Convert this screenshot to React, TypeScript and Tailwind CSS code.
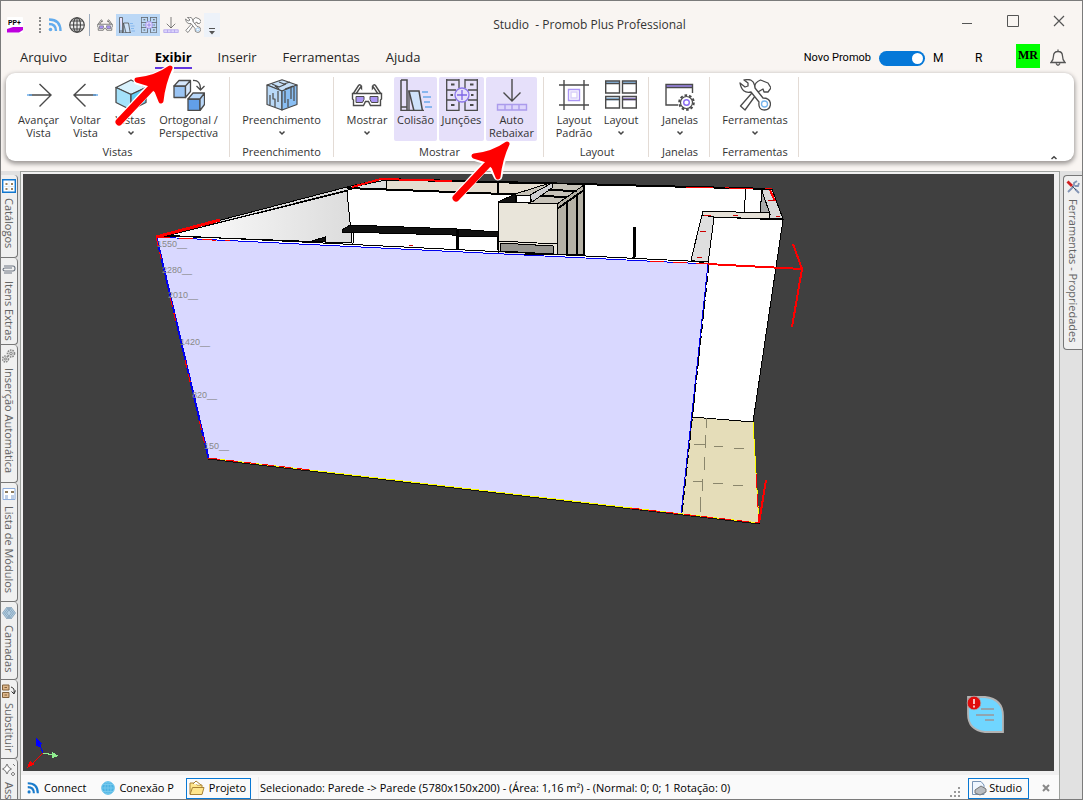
import type { ReactNode } from "react";

type IconProps = { className?: string };

const GlassesIcon = ({ className = "h-8 w-8" }: IconProps) => (
  <svg viewBox="0 0 32 32" className={className} fill="none" stroke="#4a4a4a" strokeWidth="1.4">
    <path d="M2 15 7.5 6.5Q9 5 10.300 6.800 M5 15 9.500 8.200 10.500 9.500V6.800 M30 15 24.500 6.500Q23 5 21.700 6.800M27 15 22.500 8.200 21.500 9.500V6.800" />
    <path d="M1.500 14.500H30.500V20L29.500 21V26.500H19.500L17.500 22.500H14.500L12.500 26.500H2.500V21L1.500 20Z" fill="#fff" />
    <path d="M5 17.500H13V20.500L11.500 23.500H5Z M19 17.500H27V23.500H20.500L19 20.500Z" fill="#ab96f5" strokeWidth="1" />
  </svg>
);

const CollisionIcon = ({ className = "h-8 w-8" }: IconProps) => (
  <svg viewBox="0 0 32 32" className={className} fill="none" stroke="#4a4a4a" strokeWidth="1.5">
    <path d="M1 1H7V32 M1 1V32 M1 28H7" fill="#e6e0fa" />
    <path d="M9 12H19L22.500 32H14Z" fill="#cfe3fa" />
    <path d="M1 31.500H24 M9 12V31" strokeWidth="1.300" />
    <path d="M22 13H28 M23 18H31 M24 23H30 M25 28H32" stroke="#6ba8ea" strokeWidth="1.300" />
  </svg>
);

const JunctionIcon = ({ className = "h-8 w-8" }: IconProps) => (
  <svg viewBox="0 0 32 32" className={className} fill="none" stroke="#4a4a4a" strokeWidth="1.300">
    <path d="M.700 0V31.500H13V22 M13 0V9 M.700 1H13 M.700 11H10 M.700 21H10 M31.300 0V31.500H19V22 M19 0V9 M19 1H31.300 M22 11H31.300 M22 21H31.300" />
    <path d="M5 5.500H8.500 M24 5.500H27.500 M5 26H8.500 M24 26H27.500 M4.500 16H7 M25 16H27.500" strokeWidth="1.800" />
    <circle cx="16" cy="16" r="7" stroke="#8b76e8" fill="#e6e0fa" />
    <path d="M16 11V21 M11 16H21" stroke="#7d66e6" />
  </svg>
);

const LowerIcon = ({ className = "h-8 w-8" }: IconProps) => (
  <svg viewBox="0 0 32 32" className={className} fill="none" stroke="#4a4a4a" strokeWidth="1.400">
    <path d="M16 0V22 M7.500 13.500 16 22 24.500 13.500" />
    <path d="M1.500 25.500H30.500V31H1.500Z M9 25.500V31 M16 25.500V31 M23 25.500V31" stroke="#ab9bec" fill="#ddd5fb" />
  </svg>
);

const ToolsIcon = ({ className = "h-8 w-8" }: IconProps) => (
  <svg viewBox="0 0 32 32" className={className} fill="#fff" stroke="#4a4a4a" strokeWidth="1.300" strokeLinejoin="round">
    <path d="M19 13 6 31 1.500 27 16 10.500Q14 4 21.500 1L29 4 32 9 29 13 25 13 24 10Z" />
    <path d="M1 4 6 8 9 7 9 4 5 1Q14 -1 15.500 6L16 9 24 19Q31 19 31.500 25 31 31 25.500 31 19 31 20 23L12 13Q3 15 1 4Z" />
    <circle cx="25.500" cy="25" r="3" stroke="#78b6ee" />
  </svg>
);

const ForwardIcon = () => (
  <svg viewBox="0 0 32 32" className="h-8 w-8" fill="none" stroke="#4a4a4a" strokeWidth="1.400">
    <path d="M6 16H28 M16.500 5 28 16 16.500 27.500" />
    <path d="M4 16H9" stroke="#64a9eb" />
  </svg>
);

const BackIcon = () => (
  <svg viewBox="0 0 32 32" className="h-8 w-8" fill="none" stroke="#4a4a4a" strokeWidth="1.400">
    <path d="M26 16H4 M15.500 5 4 16 15.500 27.500" />
    <path d="M23 16H28" stroke="#64a9eb" />
  </svg>
);

const CubeIcon = () => (
  <svg viewBox="0 0 32 32" className="h-8 w-8" stroke="#4a4a4a" strokeWidth="1.300" strokeLinejoin="round">
    <path d="M1 8.500 16 1 31 8.500 16 15.500Z" fill="#d8f2fd" />
    <path d="M1 8.500 16 15.500V31L1 23.500Z" fill="#a4e1fa" />
    <path d="M31 8.500 16 15.500V31L31 23.500Z" fill="#62cdf5" />
  </svg>
);

const PerspectiveIcon = () => (
  <svg viewBox="0 0 32 32" className="h-8 w-8" stroke="#4a4a4a" strokeWidth="1.300" strokeLinejoin="round">
    <path d="M1 7H12.500V18.500H1Z" fill="#9ac4f3" />
    <path d="M1 7 6 1.500H17.500L12.500 7Z M12.500 7 17.500 1.500V12.500L12.500 18.500Z" fill="#d4e6fb" />
    <path d="M15 20H27V31.500H15Z" fill="#629fe9" />
    <path d="M15 20 20 14H31.500L27 20Z M27 20 31.500 14V25.500L27 31.500Z" fill="#b9d7f8" />
    <path d="M20 1.500Q27.500 1 27.500 10 M23.500 7 27.500 11 31.500 7" fill="none" />
  </svg>
);

const FillIcon = () => (
  <svg viewBox="0 0 32 32" className="h-8 w-8" stroke="#4a4a4a" strokeWidth="1.200" strokeLinejoin="round">
    <path d="M1 6 16 .800 31 6 16 12Z" fill="#c6dff7" />
    <path d="M1 6 16 12V31L1 25.500Z" fill="#b9d9f8" />
    <path d="M31 6 16 12V31L31 25.500Z" fill="#89bef3" />
    <path d="M4 16V26 M7 14V20H9V28 M12 12V23 M19 12V24 M22 20V28 M25 9V20 M28 8V22 M6 5 13 8 20 5 M13 3 18 5 24 3 M19 10 27 7 M9 7 13 10" fill="none" />
  </svg>
);

const DefaultLayoutIcon = () => (
  <svg viewBox="0 0 32 32" className="h-8 w-8" fill="none" stroke="#4a4a4a" strokeWidth="1.400">
    <path d="M6 1V31 M26 1V31 M1 6H31 M1 26H31" />
    <path d="M10.500 10.500H21.500V21.500H10.500Z" stroke="#ab96f5" />
    <path d="M13 13H19V19H13Z" stroke="#d9cffa" />
  </svg>
);

const LayoutIcon = () => (
  <svg viewBox="0 0 32 32" className="h-8 w-8" fill="none" stroke="#4a4a4a" strokeWidth="1.400">
    <path d="M1 3.500H14 M18 3.500H31 M1 20H14" stroke="#90c4f3" strokeWidth="2.500" />
    <path d="M18 20H31" stroke="#a38be8" strokeWidth="2.500" />
    <path d="M.700 2H14.500V14H.700Z M17.500 2H31.300V14H17.500Z M.700 17.500H14.500V29H.700Z M17.500 17.500H31.300V29H17.500Z M.700 4.500H14.500 M17.500 4.500H31.300 M.700 20.500H14.500 M17.500 20.500H31.300" />
  </svg>
);

const WindowIcon = () => (
  <svg viewBox="0 0 32 32" className="h-8 w-8" fill="none" stroke="#4a4a4a" strokeWidth="1.400">
    <path d="M2 7H28" stroke="#a08af0" strokeWidth="2" />
    <path d="M14 26H2V5.500H28.500V14 M2 8.500H28.500" />
    <circle cx="22.500" cy="23.500" r="7.300" strokeDasharray="2.600 2" strokeWidth="2" />
    <circle cx="22.500" cy="23.500" r="6" fill="#fff" strokeWidth="1.200" />
    <circle cx="22.500" cy="23.500" r="2.800" stroke="#8b6cf2" />
  </svg>
);

const Chevron = ({ up = false }: { up?: boolean }) => (
  <svg viewBox="0 0 8 6" className="h-1.5 w-2" fill="none" stroke="#444" strokeWidth="1.500">
    <path d={up ? "M1.500 4 4 1.800 6.500 4" : "M1.500 1.500 4 4 6.500 1.500"} />
  </svg>
);

const RssIcon = ({ className = "h-4 w-4" }: IconProps) => (
  <svg viewBox="0 0 16 16" className={className} fill="none" stroke="currentColor" strokeWidth="2.400">
    <circle cx="3.500" cy="12.500" r="1.800" fill="currentColor" stroke="none" />
    <path d="M2 7Q9 7 9 14 M2 2.500Q13.500 2.500 13.500 14" />
  </svg>
);

const GlobeIcon = ({ className = "h-4 w-4", fill = "#ececec" }: IconProps & { fill?: string }) => (
  <svg viewBox="0 0 16 16" className={className} fill="none" stroke="currentColor" strokeWidth="1.100">
    <circle cx="8" cy="8" r="7.300" fill={fill} />
    <ellipse cx="8" cy="8" rx="3.500" ry="7.300" />
    <path d="M8 .700V15.300 M.700 8H15.300 M2 4H14 M2 12H14" />
  </svg>
);

type RibbonButtonProps = { label: string; icon: ReactNode; width: string; menu?: boolean; active?: boolean };

const RibbonButton = ({ label, icon, width, menu, active }: RibbonButtonProps) => (
  <button
    className={`flex h-16 flex-col items-center rounded-xs pt-0.5 ${width} ${active ? "bg-[#e6e0fa]" : ""}`}
  >
    {icon}
    <span className="mt-0.5 text-center leading-[13px]">{label}</span>
    {menu && (
      <span className="flex h-[13px] items-center">
        <Chevron />
      </span>
    )}
  </button>
);

const RibbonGroup = ({ title, className, children }: { title: string; className: string; children: ReactNode }) => (
  <section className={`my-1 flex flex-col items-center border-r border-[#e3dbd5] ${className}`}>
    <div className="flex gap-0.5">{children}</div>
    <h2 className="mt-1 leading-[14px]">{title}</h2>
  </section>
);

const menus = ["Arquivo", "Editar", "Exibir", "Inserir", "Ferramentas", "Ajuda"];

const TitleBar = () => (
  <header className="flex h-11 shrink-0">
    <div className="flex w-[234px] items-center pt-1 pl-1.5">
      <svg viewBox="0 0 16 16" className="h-4 w-4">
        <rect width="16" height="16" rx="1" fill="#fff" />
        <text x="1" y="7.500" fontSize="7" fontWeight="700" fontFamily="Roboto, sans-serif">PP+</text>
        <path d="M0 12 6 10H16V13L12 15.500H0Z" fill="#be00de" />
      </svg>
      <div className="ml-4 h-4 w-0 border-l-2 border-dotted border-[#8a8a8a]" />
      <button className="ml-1.5 text-[#62abed]" aria-label="Connect"><RssIcon /></button>
      <button className="ml-1.5 text-[#454545]" aria-label="Web"><GlobeIcon /></button>
      <div className="mx-1 h-5.5 border-l border-[#9faec0]" />
      <button className="px-[3px]" aria-label="Mostrar"><GlassesIcon className="h-4 w-4" /></button>
      <button className="bg-[#bcd8f6] px-[3px] py-[3px]" aria-label="Colisão"><CollisionIcon className="h-4 w-4" /></button>
      <button className="bg-[#bcd8f6] px-[3px] py-[3px]" aria-label="Junções"><JunctionIcon className="h-4 w-4" /></button>
      <button className="px-[3px]" aria-label="Auto Rebaixar"><LowerIcon className="h-4 w-4" /></button>
      <button className="px-[3px]" aria-label="Ferramentas"><ToolsIcon className="h-4 w-4" /></button>
      <button className="flex h-6 w-4 items-end justify-center bg-[#edf2f9] pb-0.5" aria-label="Mais">
        <svg viewBox="0 0 8 7" className="h-[7px] w-2" fill="#555"><path d="M1 0H7V1H1Z M1 3H7L4 6.500Z" /></svg>
      </button>
    </div>
    <h1 className="flex flex-1 items-center justify-center pt-1 text-[12px] whitespace-pre text-[#333]">Studio  - Promob Plus Professional</h1>
    <div className="flex pb-1 text-[#555]">
      <button className="flex w-[46px] items-center justify-center" aria-label="Minimizar">
        <svg viewBox="0 0 12 12" className="h-3 w-3" stroke="currentColor"><path d="M1 8.500H11" /></svg>
      </button>
      <button className="flex w-[46px] items-center justify-center" aria-label="Maximizar">
        <svg viewBox="0 0 12 12" className="h-3 w-3" fill="none" stroke="currentColor"><path d="M.500 .500H11.500V11.500H.500Z" /></svg>
      </button>
      <button className="flex w-[46px] items-center justify-center" aria-label="Fechar">
        <svg viewBox="0 0 12 12" className="h-3 w-3" stroke="currentColor" strokeWidth="1.200"><path d="M1 1 11 11 M11 1 1 11" /></svg>
      </button>
    </div>
  </header>
);

const MenuBar = () => (
  <nav className="flex h-7 shrink-0 items-start pl-1.5 text-[13px] text-[#252525]">
    {menus.map((menu) => (
      <a key={menu} href="#" className="px-[13px] pt-0.5">
        <span className={menu === "Exibir" ? "block border-b-2 border-[#6236df] leading-5 font-bold text-black" : "block leading-5"}>
          {menu}
        </span>
      </a>
    ))}
    <div className="ml-auto flex h-[26px] items-center pr-4 font-['Roboto',sans-serif] text-[12px] text-black">
      <label htmlFor="novo-promob" className="text-[11px]">Novo Promob</label>
      <input
        id="novo-promob"
        type="checkbox"
        defaultChecked
        className="ml-2 h-[15px] w-[46px] appearance-none rounded-full bg-[#0578d8] pr-0.5 before:mt-0.5 before:ml-auto before:block before:h-[11px] before:w-[11px] before:rounded-full before:bg-white"
      />
      <span className="ml-2 w-[42px]">M</span>
      <span className="w-[41px]">R</span>
      <span className="mb-1 h-6 w-6 bg-[#00ff00] text-center font-['Liberation_Serif',serif] leading-[22px] font-bold">MR</span>
      <button className="ml-2.5" aria-label="Notificações">
        <svg viewBox="0 0 16 18" className="h-[18px] w-4" fill="none" stroke="#555" strokeWidth="1.300">
          <path d="M1 13.500Q3.500 11 3.500 7 3.500 2.500 8 2.500 12.500 2.500 12.500 7 12.500 11 15 13.500Z M8 .500V2.500 M6 14.500Q8 18 10 14.500" />
        </svg>
      </button>
    </div>
  </nav>
);

const Ribbon = () => (
  <div className="mr-2 ml-[5px] flex h-[88px] shrink-0 rounded-[9px] bg-white text-[11px] text-[#333] shadow-[0_2px_4px_1px_#9f9b99]">
    <RibbonGroup title="Vistas" className="w-[224px]">
      <RibbonButton width="w-[50px]" label="Avançar Vista" icon={<ForwardIcon />} />
      <RibbonButton width="w-10" label="Voltar Vista" icon={<BackIcon />} />
      <RibbonButton width="w-[46px]" label="Vistas" icon={<CubeIcon />} menu />
      <RibbonButton width="w-[66px]" label="Ortogonal / Perspectiva" icon={<PerspectiveIcon />} />
    </RibbonGroup>
    <RibbonGroup title="Preenchimento" className="w-[104px]">
      <RibbonButton width="w-[90px]" label="Preenchimento" icon={<FillIcon />} menu />
    </RibbonGroup>
    <RibbonGroup title="Mostrar" className="w-[210px] pl-0.5">
      <RibbonButton width="w-[50px]" label="Mostrar" icon={<GlassesIcon />} menu />
      <RibbonButton width="w-[43px]" label="Colisão" icon={<CollisionIcon />} active />
      <RibbonButton width="w-[45px]" label="Junções" icon={<JunctionIcon />} active />
      <RibbonButton width="w-[51px]" label="Auto Rebaixar" icon={<LowerIcon />} active />
    </RibbonGroup>
    <RibbonGroup title="Layout" className="w-[105px] pl-0.5">
      <RibbonButton width="w-[46px]" label="Layout Padrão" icon={<DefaultLayoutIcon />} />
      <RibbonButton width="w-[44px]" label="Layout" icon={<LayoutIcon />} menu />
    </RibbonGroup>
    <RibbonGroup title="Janelas" className="w-[61px] pl-0.5">
      <RibbonButton width="w-[50px]" label="Janelas" icon={<WindowIcon />} menu />
    </RibbonGroup>
    <RibbonGroup title="Ferramentas" className="w-[89px] pl-0.5">
      <RibbonButton width="w-[76px]" label="Ferramentas" icon={<ToolsIcon />} menu />
    </RibbonGroup>
    <button className="mt-auto mr-4 ml-auto" aria-label="Recolher"><Chevron up /></button>
  </div>
);

const catalogIcon = (
  <svg viewBox="0 0 14 14" className="h-3.5 w-3.5">
    <path d="M.700 .700H13.300V13.300H.700Z" fill="#fff" stroke="#1177cf" strokeWidth="1.400" />
    <path d="M3.500 4H5.500V6H3.500Z M9 4H11V6H9Z M3.500 9H5.500V11H3.500Z M9 9H11V11H9Z" fill="#99815f" />
    <path d="M7 2V12 M2 7.500H12" stroke="#dcebf7" />
  </svg>
);

const clipIcon = (
  <svg viewBox="0 0 14 14" className="h-3.5 w-3.5" fill="none" stroke="#6c7581" strokeWidth="1.100">
    <path d="M2 4H11Q13 4 13 6.500 13 9 11 9H3Q1 9 1 7.500 1 6 3 6H10 M2 11H10" />
  </svg>
);

const gearsIcon = (
  <svg viewBox="0 0 14 14" className="h-3.5 w-3.5" fill="#ddd" stroke="#888">
    <circle cx="9" cy="4.500" r="3.500" strokeDasharray="1.500 1" strokeWidth="1.600" />
    <circle cx="9" cy="4.500" r="1.300" />
    <circle cx="3.500" cy="10" r="3" strokeDasharray="1.500 1" strokeWidth="1.500" />
    <circle cx="3.500" cy="10" r="1" />
  </svg>
);

const listIcon = (
  <svg viewBox="0 0 14 14" className="h-3.5 w-3.5">
    <path d="M1 1.500H13V12.500H1Z" fill="#fff" stroke="#8eaddb" />
    <path d="M3 4H6V6H3Z M9 4H12V6H9Z" fill="#8d7a5d" />
    <path d="M3 9H6 M9 9H12 M3 11H6 M9 11H12" stroke="#7e9dcc" />
  </svg>
);

const layersIcon = (
  <svg viewBox="0 0 14 14" className="h-3.5 w-3.5" fill="#b4cfe2" stroke="#7593ad" strokeWidth=".700">
    <path d="M9 1 13.500 7 9 13 4.500 7Z M7 1 11.500 7 7 13 2.500 7Z M5 1 9.500 7 5 13 .500 7Z" />
  </svg>
);

const swapIcon = (
  <svg viewBox="0 0 14 14" className="h-3.5 w-3.5" fill="#dfb88c" stroke="#80613d">
    <path d="M.500 1H7V6H.500Z M.500 8.500H7V13.500H.500Z" />
    <path d="M2.500 3.500H5 M2.500 11H5" />
    <path d="M9 3Q13 4 12 9 M9.500 7.500 12 10 13.500 6.500" fill="none" stroke="#333" />
  </svg>
);

const sparkIcon = (
  <svg viewBox="0 0 14 14" className="h-3.5 w-3.5" fill="#fff" stroke="#777">
    <path d="M5 1Q6 5 9.500 6 6 7 5 11 4 7 .500 6 4 5 5 1Z M11 9Q11.500 10.500 13 11 11.500 11.500 11 13 10.500 11.500 9 11 10.500 10.500 11 9Z M11 1 13 3" />
  </svg>
);

const propertiesIcon = (
  <svg viewBox="0 0 14 14" className="h-3.5 w-3.5" fill="none" strokeWidth="1.800">
    <path d="M2 12 8 6M8 6 8 3 11 1M9 6 12 6 13 3 M9 9 13 13" stroke="#8294b5" />
    <path d="M1.500 1.500 6 6" stroke="#d01f1f" strokeWidth="2.800" />
    <path d="M6 6 10 10" stroke="#456" strokeWidth="1" />
  </svg>
);

const leftTabs = [
  { label: "Catálogos", icon: catalogIcon, height: "h-[83px]" },
  { label: "Itens Extras", icon: clipIcon, height: "h-[87px]" },
  { label: "Inserção Automática", icon: gearsIcon, height: "h-[138px]" },
  { label: "Lista de Módulos", icon: listIcon, height: "h-[119px]" },
  { label: "Camadas", icon: layersIcon, height: "h-[78px]" },
  { label: "Substituir", icon: swapIcon, height: "h-[79px]" },
  { label: "Ass", icon: sparkIcon, height: "h-[79px]" },
];

const RoomScene = () => (
  <svg viewBox="23 174 1031 597" preserveAspectRatio="xMidYMid slice" className="absolute inset-0 h-full w-full" shapeRendering="crispEdges" fill="none" stroke="#000">
    <defs>
      <linearGradient id="sideWall" x1="0" x2="1">
        <stop offset="0" stopColor="#fff" />
        <stop offset="1" stopColor="#dcdcdc" />
      </linearGradient>
    </defs>
    {/* room shell */}
    <path d="M156 237 347 188 381 179 772 189 783 219 708 265Z" fill="#fff" stroke="none" />
    <path d="M166 236 347 191 352 243Z" fill="url(#sideWall)" />
    <path d="M156 237 347 187 381 179 386 180 348 190 166 236Z" fill="#d9d9d9" />
    <path d="M347 188 386 180V190Z" fill="#ddd" />
    <path d="M386 180 550 184 530 195 386 190Z" fill="#e5ddd0" />
    <path d="M498 182V193" strokeWidth="2" />
    <path d="M381 179 772 189" strokeWidth="2" />
    <path d="M347 188 530 195" strokeWidth="2" />
    {/* shelf */}
    <path d="M342 230 350 225 457 229 498 232V236H458L452 235 342 232Z" fill="#111" />
    <path d="M353 232V243 M458 230V249" />
    <path d="M457 230V249" strokeWidth="3" />
    <path d="M461 236H497V250" />
    <path d="M312 241 325 237V242Z" fill="#111" />
    {/* wardrobe */}
    <path d="M498 202 515 194 550 183 584 185 557 204Z" fill="#c7c3b9" />
    <path d="M498 202 515 194V202Z" fill="#111" />
    <path d="M516 195H530V202H516Z" fill="#fff" />
    <path d="M530 195 552 183V188L532 202Z" fill="#cfcfd2" />
    <path d="M498 202 557 204V254H498Z" fill="#e9e5da" />
    <path d="M498 241 557 244 M500 243 553 246V254L500 251Z" fill="#96958f" />
    <path d="M557 204 584 185V254H557Z" fill="#b5b1a5" />
    <path d="M557 209 584 190 M567 201V254 M577 194V254 M584 185V254" strokeWidth="2" />
    <path d="M548 190 577 191 M540 196 567 197" strokeWidth="2" />
    {/* passage on the right */}
    <path d="M746 189 744 212 M762 190 760 213" />
    <path d="M762 190 772 189 783 219 769 218Z" fill="#d9d9d9" />
    <path d="M762 191 770 214 760 213Z" fill="#aaa" />
    <path d="M714 217 783 220 753 422 692 417 708 264Z" fill="#fff" />
    <path d="M702 211 769 213V219L713 217 702 215Z" fill="#e5e0d7" />
    <path d="M702 215 714 217 708 264 691 260Z" fill="#dedede" />
    <path d="M692 417 753 422 759 523 680 514Z" fill="#e5ddb9" />
    <path d="M706 418V428 M705 435V448 M704 457V470 M702 479V491 M700 497V512 M694 444H705 M714 446H723 M734 448H744 M693 481H703 M713 483H723 M733 485H743" stroke="#8a866c" />
    <path d="M635 227 634 258" strokeWidth="3" />
    {/* selected wall */}
    <path d="M156 237 708 264 681 514 208 458Z" fill="#d9d8ff" stroke="none" />
    <path d="M160 235 708 262" />
    <path d="M709 264 682 514" strokeDasharray="9 3" />
    <path d="M156 237 708 264 681 514 M156 237 208 458" stroke="#0000f0" />
    <path d="M157 237 209 458" stroke="#0000f0" />
    <path d="M156 237 208 458" stroke="#f00" strokeDasharray="9 6 8 40" />
    <path d="M156 237 230 241 M650 261 708 264" stroke="#f00" strokeDasharray="14 9" />
    <path d="M156 237 220 220" stroke="#f00" strokeWidth="3" />
    <path d="M352 187 381 179 452 181" stroke="#f00" strokeWidth="2" />
    <path d="M685 187 772 189" stroke="#f00" strokeDasharray="28 12" />
    <path d="M770 190 775 201" stroke="#f00" strokeWidth="2" />
    <path d="M704 215H711 M733 215H738 M700 231H706 M697 257H702 M768 200H774 M776 216H780 M409 245H413" stroke="#c00" />
    <path d="M208 459 759 524" stroke="#111" />
    <path d="M208 458 759 523" stroke="#ff0" />
    <path d="M208 458 310 470 M630 508 759 523" stroke="#f00" strokeDasharray="12 6" />
    <path d="M753 422 759 523" stroke="#ff0" />
    <path d="M756 474 759 523" stroke="#f00" strokeDasharray="14 6" />
    <path d="M708 264 802 269 M793 244 802 269 792 327 M766 480 759 523" stroke="#f00" strokeWidth="2" />
    <g fill="#888" stroke="none" fontSize="9" fontFamily="Liberation Sans, sans-serif">
      <text x="157" y="247">1550__</text>
      <text x="162" y="273">2280__</text>
      <text x="168" y="298">2010__</text>
      <text x="180" y="345">1420__</text>
      <text x="192" y="398">820__</text>
      <text x="204" y="449">150__</text>
    </g>
  </svg>
);

const Viewport = () => (
  <div className="relative mx-0.5 mt-0.5 mr-[5px] flex-1 overflow-hidden bg-[#404040]">
    <RoomScene />
    <svg viewBox="0 0 36 36" className="absolute bottom-0 left-1 h-9 w-9" shapeRendering="crispEdges">
      <path d="M16 18 5 29" stroke="#f00" />
      <path d="M0 33 3 26 8 29Z" fill="#f00" />
      <path d="M16 18 12 8" stroke="#00f" />
      <path d="M9 3 15 8 13 12 9 11Z" fill="#00f" />
      <path d="M16 18 27 20" stroke="#90ee90" />
      <path d="M25 17 32 21 25 23Z" fill="#90ee90" />
    </svg>
    <button className="absolute right-[49px] bottom-[37px]" aria-label="Avisos">
      <svg viewBox="0 0 40 40" className="h-10 w-10">
        <path d="M3 3H20Q38 5 38 22V38H20Q3 36 3 20Z" fill="#70d6ff" stroke="#b3b3b3" strokeWidth="1.800" />
        <path d="M16 15H29 M11 21H29 M20 26H29" stroke="#91a5b0" strokeWidth="1.800" />
        <circle cx="9" cy="9" r="6.800" fill="#e00c0c" stroke="#aaa" strokeWidth=".700" />
        <path d="M9 5V10 M9 11.500V13.500" stroke="#fff" strokeWidth="1.500" />
      </svg>
    </button>
  </div>
);

const StatusBar = () => (
  <footer className="mt-1 flex h-6 items-center bg-[#fafafa] pt-0.5 text-[11px] whitespace-nowrap text-black">
    <button className="flex items-center gap-1 pl-[5px]"><RssIcon className="h-3.5 w-3.5 text-[#187bcc]" />Connect</button>
    <button className="ml-[15px] flex items-center gap-1"><GlobeIcon className="h-3.5 w-3.5 text-[#78c9ec]" fill="#4bb3e4" />Conexão P</button>
    <button className="ml-3 flex h-[21px] items-center gap-1 border border-[#0878d4] px-0.5 pr-1">
      <svg viewBox="0 0 16 16" className="h-4 w-4" fill="#ffe68c" stroke="#aa8336">
        <path d="M1 14V3H6L8 5H13V14Z" />
        <path d="M4 4 7 1 12 5" fill="#fff" />
        <path d="M1 14.500 3.500 7.500H15L13 14.500Z" />
      </svg>
      Projeto
    </button>
    <p className="ml-[7px] flex h-full min-w-0 flex-1 items-center overflow-hidden border-l border-[#eee] pl-px">
      Selecionado: Parede -&gt; Parede (5780x150x200) - (Área: 1,16 m²) - (Normal: 0; 0; 1 Rotação: 0)
    </p>
    <svg viewBox="0 0 10 10" className="mt-auto mb-0.5 h-2.5 w-2.5" fill="#999">
      <path d="M8 0H10V2H8Z M4 4H6V6H4Z M8 4H10V6H8Z M0 8H2V10H0Z M4 8H6V10H4Z M8 8H10V10H8Z" />
    </svg>
    <button className="ml-2 flex h-[21px] items-center gap-0.5 border border-[#0878d4] px-0.5 pr-1.5">
      <svg viewBox="0 0 16 16" className="h-4 w-4" stroke="#7894b6">
        <path d="M1.500 1.500H10L13 5V14.500H1.500Z" fill="#eff6ff" />
        <path d="M4 10 10 6 15 9V12L9 15 4 13Z" fill="#b9bcc0" stroke="#777" />
      </svg>
      Studio
    </button>
    <button className="mr-2 ml-3 flex w-2.5 justify-center" aria-label="Fechar Studio">
      <svg viewBox="0 0 8 8" className="h-2 w-2" stroke="#888" strokeWidth="2"><path d="M1 1 7 7 M7 1 1 7" /></svg>
    </button>
  </footer>
);

const PointerArrow = ({ className }: IconProps) => (
  <svg viewBox="0 0 60 64" className={`pointer-events-none absolute h-16 w-[60px] ${className}`} strokeLinejoin="round" strokeLinecap="round">
    <path d="M5 59 37 24 M56 6Q40 17 24 17.500L35 21 43 29 47 37Q49 20 56 6Z" fill="#fff" stroke="#fff" strokeWidth="9" />
    <path d="M5 59 38 24" stroke="#f00" strokeWidth="7" />
    <path d="M56 5Q42 15 23 17L36 21 43 28 47 38Q49 20 56 5Z" fill="#f00" stroke="#f00" strokeWidth="5" />
  </svg>
);

const App = () => {
  return (
    <div className="relative flex h-screen flex-col overflow-hidden border border-[#7b7b7b] bg-[#f9f5f2] font-['Open_Sans','Noto_Sans',sans-serif]">
      <TitleBar />
      <MenuBar />
      <Ribbon />
      <div className="mt-2.5 flex min-h-0 flex-1 bg-[#e1e1e1]">
        <aside className="w-[19px] shrink-0 overflow-hidden pt-1">
          {leftTabs.map((tab) => (
            <button
              key={tab.label}
              className={`flex w-[17px] shrink-0 flex-col items-center gap-[5px] overflow-hidden rounded-r-sm border-r border-b border-[#777] bg-[#f0f0f0] pt-1 text-[11px] leading-[14px] whitespace-nowrap text-[#636363] ${tab.height}`}
            >
              {tab.icon}
              <span className="[writing-mode:vertical-rl]">{tab.label}</span>
            </button>
          ))}
        </aside>
        <main className="flex min-w-0 flex-1 flex-col border-x border-t border-[#9da19d] bg-[#f0f0f0]">
          <Viewport />
          <StatusBar />
        </main>
        <aside className="w-[22px] shrink-0 pt-1 pl-[3px]">
          <button className="flex h-[175px] w-full flex-col items-center gap-[5px] rounded-l-sm border-y border-l border-[#777] bg-[#f0f0f0] pt-1 text-[11px] leading-[14px] whitespace-nowrap text-[#636363]">
            {propertiesIcon}
            <span className="[writing-mode:vertical-rl]">Ferramentas - Propriedades</span>
          </button>
        </aside>
      </div>
      <PointerArrow className="top-[62px] left-[113px]" />
      <PointerArrow className="top-[138px] left-[450px]" />
    </div>
  );
};

export default App;
